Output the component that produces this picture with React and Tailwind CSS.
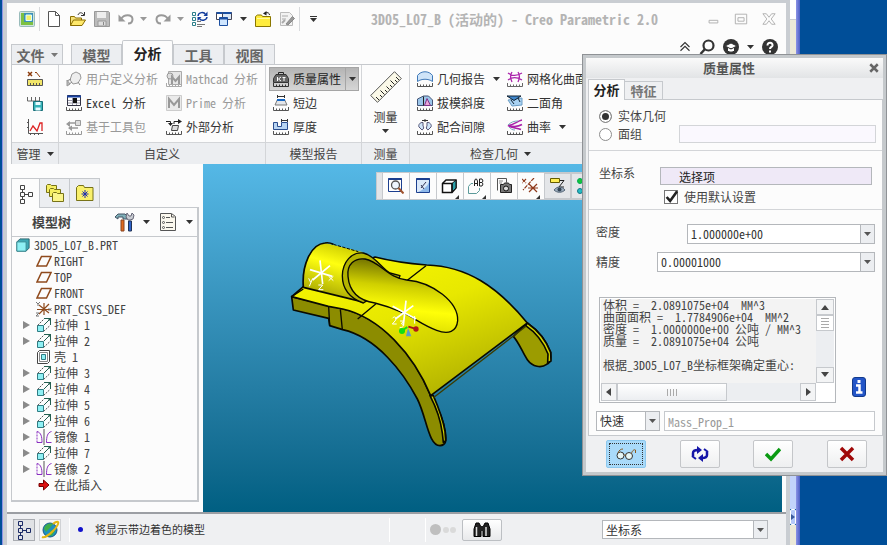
import { useState } from 'react'
import clsx from 'clsx'

/* ---------- icons ---------- */

function Icon({ children, className = 'size-4', box = '0 0 16 16' }) {
  return (
    <svg viewBox={box} className={clsx('shrink-0', className)} fill="none" stroke="currentColor" aria-hidden="true">
      {children}
    </svg>
  )
}

const Caret = ({ className = 'text-[#333]' }) => (
  <Icon box="0 0 7 4" className={clsx('h-1 w-[7px]', className)}>
    <path d="M0 0h7L3.500 4z" fill="currentColor" stroke="none" />
  </Icon>
)

// small ruler drawn under most of the analysis icons
const Ruler = ({ color = '#555' }) => <path d="M.5 12v3.500h15V12M3.500 13.500v2M6.500 13.500v2M9.500 13.500v2M12.500 13.500v2" stroke={color} />

const AppIcon = () => (
  <Icon>
    <rect x=".5" y=".5" width="15" height="15" rx="1" fill="#cfe3dc" stroke="#9bb" />
    <path d="M2 2h4v8h8v4H2z" fill="#7cc142" stroke="none" />
    <path d="M5 2h9v9H5z" fill="#3c8fb8" stroke="none" />
    <path d="M7 4h5.500v5.500H7z" fill="#f4f06a" stroke="#dff" />
  </Icon>
)
const NewIcon = () => (
  <Icon>
    <path d="M2.500.5h7l4 4v11h-11z" fill="#fff" stroke="#555" />
    <path d="M9.500.5v4h4" stroke="#555" />
  </Icon>
)
const OpenIcon = () => (
  <Icon>
    <path d="M.5 14.500v-9h4l1 1.500h6v2" fill="#f6e27a" stroke="#8a6d00" />
    <path d="M.5 14.500l3-5.500h12l-3.500 5.500z" fill="#ffe96b" stroke="#8a6d00" />
    <path d="M8 4c1-3 4-3 6 0M14.500 1v3.500H11" stroke="#333" />
  </Icon>
)
const SaveIcon = () => (
  <Icon>
    <path d="M.5.500h14l1 1v14H.5z" fill="#bbb" stroke="#999" />
    <path d="M3 1h9v6H3z" fill="#eee" stroke="none" />
    <path d="M4 10h8v5H4z" fill="#ddd" stroke="#999" />
    <path d="M9.500 11v3" stroke="#888" />
  </Icon>
)
const UndoIcon = () => (
  <Icon>
    <path d="M3 8c3-5 11-5 11.500 0 0 3-2 4.500-4.500 4.500" stroke="#999" strokeWidth="2" />
    <path d="M.5 3.500v7h7z" fill="#999" stroke="none" />
  </Icon>
)
const RedoIcon = () => (
  <Icon>
    <path d="M13 8C10 3 2 3 1.500 8c0 3 2 4.500 4.500 4.500" stroke="#999" strokeWidth="2" />
    <path d="M15.500 3.500v7h-7z" fill="#999" stroke="none" />
  </Icon>
)
const RegenIcon = () => (
  <Icon>
    <path d="M.5 1.500h3v3h-3zM.5 6.500h3v3h-3zM.5 11.500h3v3h-3z" stroke="#2a7f8a" />
    <path d="M5 10.500h4M5 13.500h8M5 15.500h5" stroke="#777" />
    <path d="M6 5c.5-4 6-4.500 7.500-1.500M15 6c-.5 3.500-6 4.500-7.500 1.500" stroke="#123c9c" strokeWidth="1.500" />
    <path d="M15.500.500v4.500h-4zM5.500 10V6h4z" fill="#123c9c" stroke="none" />
  </Icon>
)
const WindowsIcon = () => (
  <Icon>
    <path d="M.5 1.500h9v7h-9z" fill="#fff" stroke="#445" />
    <path d="M.5 2h9" stroke="#1c4fa0" strokeWidth="2" />
    <path d="M6.500 1.500h9v7h-9z" fill="#dce9f7" stroke="#445" />
    <path d="M6.500 2h9" stroke="#1c4fa0" strokeWidth="2" />
    <path d="M3.500 6.500h8v8h-8z" fill="#cfe6ff" stroke="#1c4fa0" />
    <path d="M3.500 7.500h8" stroke="#1c4fa0" strokeWidth="2" />
  </Icon>
)
const CloseFolderIcon = () => (
  <Icon>
    <path d="M.5 15.500v-10l2-1.500h4l1 1.500h8v10z" fill="#ffec3d" stroke="#8a7600" />
    <path d="M2 7.500h13" stroke="#fff9a8" />
    <path d="M14.500 4c0-2-2-3-4-2" stroke="#222" />
    <path d="M8 2.500L11.500 0v4.500z" fill="#222" stroke="none" />
  </Icon>
)
const EditSheetIcon = () => (
  <Icon>
    <path d="M1.500 1.500h9l3 3v10h-12z" fill="#f2f2f2" stroke="#bbb" />
    <path d="M3 5h6M3 8h4" stroke="#aaa" />
    <path d="M7 13l6.500-7.500 2 2L9 14z" fill="#999" stroke="#888" />
    <path d="M3 12l3-3" stroke="#aaa" strokeWidth="2" />
  </Icon>
)

const CalcIcon = () => (
  <Icon>
    <path d="M1 1l4 4M5 1L1 5" stroke="#8b3a0a" strokeWidth="1.500" />
    <path d="M9 1l4 5M8 1.500h1" stroke="#8b3a0a" />
    <path d="M.5 8.500h15v6H.5z" fill="#f2e66a" stroke="#555" />
    <path d="M3.500 12v2M6.500 12v2M9.500 12v2M12.500 12v2" stroke="#555" />
  </Icon>
)
const SaveAnalysisIcon = () => (
  <Icon>
    <path d="M.5 2v4h12M4.500 2v4M8.500 2v4M12.500 2v4" stroke="#666" />
    <path d="M6.500 6.500h9v9h-9z" fill="#37b3b8" stroke="#176f78" />
    <path d="M8.500 7h5v3h-5zM8.500 12.500h5v3h-5z" fill="#e9fbff" stroke="none" />
  </Icon>
)
const GraphIcon = () => (
  <Icon>
    <path d="M1.500 0v14.500H16M3.500 14.500V16M7.500 14.500V16M11.500 14.500V16M0 3.500h1.500M0 8.500h1.500" stroke="#555" />
    <path d="M3 12l3-5 4 5 3-8h2v8" stroke="#d22" strokeWidth="1.300" />
  </Icon>
)
const UdaIcon = () => (
  <Icon>
    <path d="M6 3l4-2 4 2 1 4-3 5-5 1-3-4z" fill="#eee" stroke="#999" />
    <path d="M1 10l4-2M2 14l4-3M12 11l2 3" stroke="#888" />
    <path d="M1 9l3 4-3 2z" fill="#bbb" stroke="#999" />
  </Icon>
)
const ExcelIcon = () => (
  <Icon>
    <path d="M1.500.500h13v10h-13z" fill="#fff" stroke="#334" />
    <path d="M1 1.500h14" stroke="#1740a0" strokeWidth="2" />
    <path d="M6.500 3v7M2 5.500h12M2 8h12M10.500 3v7" stroke="#99a" />
    <path d="M7 3h4v5H7z" fill="#111" stroke="none" />
    <Ruler />
  </Icon>
)
const ToolkitIcon = () => (
  <Icon>
    <path d="M9.500 1.500h5v5h-5z" fill="#ddd" stroke="#999" />
    <path d="M9 4H3v3M3 9h9" stroke="#999" strokeWidth="1.500" />
    <path d="M0 5l4-3v6zM6 6.500L2 9l4 3z" fill="#999" stroke="none" />
    <Ruler color="#999" />
  </Icon>
)
const MathcadIcon = () => (
  <Icon>
    <path d="M2.500.500h13v13h-13z" fill="#e6e6e6" stroke="#aaa" />
    <circle cx="4" cy="5" r="3" fill="#ddd" stroke="#999" />
    <path d="M6 13V6l3.500 4L13 6v7" stroke="#999" strokeWidth="2" />
    <Ruler color="#aaa" />
  </Icon>
)
const PrimeIcon = () => (
  <Icon>
    <path d="M.5.500h15v15H.5z" fill="#eaeaea" stroke="#ccc" />
    <path d="M3 13V4l5 6 5-6v9" stroke="#999" strokeWidth="2" />
  </Icon>
)
const ExternalIcon = () => (
  <Icon>
    <path d="M6.500 6.500h6l-1 5h-6z" fill="#ddd" stroke="#444" />
    <path d="M0 2.500h4.500v3M8 5V2.500h5" stroke="#222" />
    <path d="M2 4h5L4.500 7zM12 0l4 2.500L12 5z" fill="#222" stroke="none" />
    <Ruler />
  </Icon>
)
const MassIcon = () => (
  <Icon>
    <path d="M5.500 4V1.500h5V4" stroke="#222" />
    <path d="M3 3.500h10l2.500 4v4H.5v-4z" fill="#666" stroke="#333" />
    <path d="M4.500 6v4M8 6L5.500 8 8 10M9.500 6.500h3M11 6v4" stroke="#fff" />
    <Ruler color="#333" />
  </Icon>
)
const ShortEdgeIcon = () => (
  <Icon>
    <path d="M4.500 0v3M11.500 0v3M4.500 1.500h7" stroke="#333" />
    <path d="M4.500 4.500h7L14 10H2z" fill="#e3e6ea" stroke="#777" />
    <path d="M4 5h8" stroke="#1667c4" strokeWidth="2" />
    <Ruler />
  </Icon>
)
const ThicknessIcon = () => (
  <Icon>
    <path d="M.5 3.500h4v4h4v-4h6v7H.5z" fill="#b8d4f2" stroke="#2a4d8f" />
    <path d="M8.500 0v3M14.500 0v3M8.500 1.500h6" stroke="#333" />
    <Ruler />
  </Icon>
)
const MeasureIcon = () => (
  <Icon box="0 0 32 32" className="size-8">
    <path d="M.7 24.500L24.500.700l6.800 6.800L7.500 31.300z" fill="#fbf9e8" stroke="#555" />
    <path d="M9 29l-3-3M12 26l-2-2M14.500 23.500l-4-4M17 21l-2-2M19.500 18.500l-3-3M22 16l-2-2M24.500 13.500l-4-4M27 11l-2-2M29 9l-3-3" stroke="#222" />
  </Icon>
)
const GeomReportIcon = () => (
  <Icon>
    <path d="M.5 10.500v-6C4-.5 12-.5 15.500 4.500v6c-4-3-11-3-15 0z" fill="#cfe4f8" stroke="#3f78b8" />
    <Ruler />
  </Icon>
)
const DraftIcon = () => (
  <Icon>
    <path d="M.5 4l6-3h5l4 4v5.500H.5z" fill="#9cc6ea" stroke="#457" />
    <path d="M7.500 10.500L10 3.500l3.500 7z" fill="#eaa8d8" stroke="#82338a" />
    <path d="M6.500 1.500v9" stroke="#222" />
    <Ruler />
  </Icon>
)
const ClearanceIcon = () => (
  <Icon>
    <path d="M6 3.500C3 3 1 6 2 8l3 3c2-1 2-3 1-4zM10 3.500c3-.5 5 2.500 4 4.500l-3 3c-2-1-2-3-1-4z" fill="#cfe4f8" stroke="#557" />
    <path d="M5 1.500h6M8 0v3" stroke="#333" />
    <Ruler />
  </Icon>
)
const MeshIcon = () => (
  <Icon>
    <path d="M1 2c4 3 9 3 14 0M1 9c4-3 9-3 14 0M5 1c-2 3-2 6 0 10M11 1c2 3 2 6 0 10" stroke="#a2a" strokeWidth="1.300" />
    <Ruler color="#666" />
  </Icon>
)
const DihedralIcon = () => (
  <Icon>
    <path d="M1 5l14-2v7L5 11z" fill="#a9d2f2" stroke="#6a9cc4" />
    <path d="M0 1h14L7 5.500z" fill="#3f86cc" stroke="#123" />
    <path d="M4 5l3 4M11 3l2 4" stroke="#123" />
    <Ruler />
  </Icon>
)
const CurvatureIcon = () => (
  <Icon>
    <path d="M15 1C10 2 7 6 1 6.500c4 1 9 2 14-1M1 6.500c3 3 8 2 13 4" stroke="#a2a" strokeWidth="1.500" />
    <path d="M1 6c3-3 6-4 10-4M2 8c2 2 3 3 6 3" stroke="#7ab" />
    <Ruler />
  </Icon>
)

const TreeTabIcon = ({ color = '#444' }) => (
  <Icon box="0 0 14 20" className="h-5 w-3.5">
    <path d="M1.500 1.500h4v4h-4zM1.500 8.500h4v4h-4zM1.500 15.500h4v4h-4zM9.500 8.500h4v4h-4z" stroke={color} />
    <path d="M3.500 5.500v3M3.500 12.500v3M5.500 10.500h4" stroke={color} />
  </Icon>
)
const FoldersIcon = () => (
  <Icon box="0 0 20 20" className="size-5">
    <path d="M1.500 9.500v-7l1-1h3l1 1h5v7z" fill="#f6ef62" stroke="#777218" />
    <path d="M4.500 13.500v-7l1-1h3l1 1h6v7z" fill="#f6ef62" stroke="#777218" />
    <path d="M7.500 18.500v-8l1-1h3l1 1h6v8z" fill="#fbf58a" stroke="#777218" />
  </Icon>
)
const FavFolderIcon = () => (
  <Icon box="0 0 20 20" className="size-5">
    <path d="M1.500 17.500v-13l2-2h5l1 2h8.500v13z" fill="#f9f06c" stroke="#777218" />
    <path d="M10 7v8M6.500 11h7M7.500 8.500l5 5M12.500 8.500l-5 5" stroke="#1a2bb0" />
  </Icon>
)
const ToolsIcon = () => (
  <Icon box="0 0 20 20" className="size-5">
    <path d="M0 5l3-3h7l2 2v3H8V5H3v2z" fill="#7fb0b8" stroke="#456" />
    <path d="M6 8h3v11H6z" fill="#e26a1c" stroke="#842" />
    <path d="M12 1l2 3h2l1-3 2 2-1 4-3 1h-2l-2-3z" fill="#c8ccd2" stroke="#667" />
    <path d="M13.500 9h3v10h-3z" fill="#2f62c8" stroke="#235" />
  </Icon>
)
const ListIcon = () => (
  <Icon box="0 0 16 20" className="h-5 w-4">
    <path d="M.5 1.500h11l4 3v14H.5z" fill="#fbf8ee" stroke="#555" />
    <path d="M6 5.500h4M6 10.500h7M6 15.500h7M11.500 2v3h3" stroke="#555" />
    <circle cx="3.500" cy="5.500" r="1" stroke="#555" />
    <circle cx="3.500" cy="10.500" r="1" stroke="#555" />
    <circle cx="3.500" cy="15.500" r="1" stroke="#555" />
  </Icon>
)

const PartIcon = () => (
  <Icon className="size-3.5">
    <path d="M1 4.500L4.500 1H15v10.500L11.500 15H1z" fill="#3fa8b4" stroke="#245f68" />
    <path d="M1 4.500h10.500V15H1z" fill="#8ff0f4" stroke="#3a8a92" />
  </Icon>
)
const PlaneIcon = () => (
  <Icon>
    <path d="M5.500 3.500H15L10.500 13H1z" stroke="#8f4a1c" strokeWidth="1.500" />
  </Icon>
)
const CsysIcon = () => (
  <Icon>
    <path d="M8 2v12M3 4l10 8M13 3L3 13M1 8.500h14" stroke="#8f4a1c" strokeWidth="1.200" />
    <path d="M0 1l2 2 2-2M2 3v2M12.500 7l3 3M15.500 7l-3 3M0 12h3l-3 3h3" stroke="#777" />
  </Icon>
)
const ExtrudeIcon = () => (
  <Icon>
    <path d="M1.500 8.500h6v6h-6z" fill="#8ff0f4" stroke="#2f7d84" />
    <path d="M1.500 8.500L8 2M7.500 14.500l6.500-6" stroke="#555" strokeDasharray="2 1" />
    <path d="M8 1.500h6.500V8M14.500 1.500L8 8" stroke="#245f50" />
    <path d="M11 1h4v4z" fill="#245f50" stroke="none" />
  </Icon>
)
const ShellIcon = () => (
  <Icon>
    <path d="M1.500 3.500l2-2h10v11l-2 2h-10z" fill="#fff" stroke="#444" />
    <path d="M3.500 3.500h8v9h-8z" stroke="#888" />
    <path d="M5.500 5.500h4v5h-4z" fill="#8ff0f4" stroke="#2f7d84" />
  </Icon>
)
const MirrorIcon = () => (
  <Icon>
    <path d="M8 0v16" stroke="#555" />
    <path d="M1 2.500c4 1 5 5 5 11H1M15.500 2.500c-4 1-5 5-5 11h5" stroke="#8a2fc0" />
    <path d="M1 2.500v11" stroke="#8a2fc0" strokeDasharray="2 1" />
  </Icon>
)
const InsertIcon = () => (
  <Icon>
    <path d="M3 6.500h4.500V3l5.500 5-5.500 5V9.500H3z" fill="#d11" stroke="#700" />
  </Icon>
)

const ZoomFitIcon = () => (
  <Icon>
    <path d="M.5.500h13v13H.5z" fill="#fff" stroke="#1c3f8f" />
    <path d="M.5 1h13" stroke="#1c3f8f" strokeWidth="2" />
    <circle cx="7.500" cy="7" r="4" fill="#eef6ff" stroke="#555" strokeWidth="1.300" />
    <path d="M10.500 10l5 5.500" stroke="#a0522d" strokeWidth="2" />
  </Icon>
)
const RepaintIcon = () => (
  <Icon>
    <path d="M1.500.500h13v14h-13z" fill="#dbe9fa" stroke="#1c3f8f" />
    <path d="M1.500 1h13" stroke="#1c3f8f" strokeWidth="2" />
    <path d="M3 14C8 12 12 9 14 4v10z" fill="#8db8ea" stroke="none" />
    <path d="M11 4l-5 6M6 7l3 4" stroke="#335" />
  </Icon>
)
const CubeIcon = () => (
  <Icon>
    <path d="M1.500 5.500L5 2h10v8l-4 4.500H1.500z" fill="#fff" stroke="#111" strokeWidth="1.500" />
    <path d="M11 5.500L15 2v8l-4 4z" fill="#2c9fa8" stroke="#111" />
    <path d="M1.500 5.500H11v9" stroke="#111" strokeWidth="1.500" />
  </Icon>
)
const ViewsIcon = () => (
  <Icon>
    <path d="M5 5.500H3l-2.500 3v7h8l3-3V10" stroke="#5b9a9a" />
    <path d="M6.500 8V3l1-2h1l1 2v5M6.500 5.500h3M11.500 1v7H14l1-2-1-1.500 1-1.500-1-2zM11.500 4.500H14" stroke="#222" />
  </Icon>
)
const CameraIcon = () => (
  <Icon>
    <path d="M1.500 12.500v-12h9v4" stroke="#555" />
    <path d="M3 3h4M3 5h3" stroke="#888" />
    <path d="M4.500 6.500h3l1-1.500h4l1 1.500h2v8h-11z" fill="#777" stroke="#222" />
    <circle cx="10" cy="10.500" r="2.500" fill="#ddd" stroke="#111" />
  </Icon>
)
const DatumIcon = () => (
  <Icon>
    <path d="M0 1l4 4M4 1L0 5M12 0L1 12" stroke="#8f3a1c" strokeWidth="1.200" strokeDasharray="4 1" />
    <path d="M7 6l8 8M15 6l-8 8M6 10h10" stroke="#8f3a1c" strokeWidth="1.200" />
  </Icon>
)
const AnnotIcon = () => (
  <Icon>
    <path d="M.5.500h9v4h-9z" fill="#ffee55" stroke="#665c00" />
    <path d="M10 2.500h4L9 9h5" stroke="#222" />
    <path d="M4 12c3-4 8-4 11 0-3 3-8 3-11 0z" fill="#9ab" stroke="#567" />
    <circle cx="9.500" cy="11.500" r="2" fill="#345" stroke="none" />
  </Icon>
)
const SpinIcon = () => (
  <Icon>
    <circle cx="3" cy="3" r="2.500" fill="#15c43a" stroke="#0a5" />
    <circle cx="3" cy="13" r="2.500" fill="#25bcc4" stroke="#178" />
    <path d="M6 3h8M6 13h8" stroke="#222" />
  </Icon>
)

const PlanetIcon = () => (
  <Icon box="0 0 20 20" className="size-5">
    <circle cx="10" cy="10" r="7" fill="#1d8fc0" stroke="#1a5c86" />
    <path d="M5 6c3-3 6-3 8-2l-3 4-4 4-2-3zM11 10l4 1-3 5-3-1z" fill="#3fae49" stroke="none" />
    <path d="M2 17C4 18 9 15 13 11S19 3 18 2s-4 1-5 2" stroke="#e2b714" strokeWidth="2" />
  </Icon>
)
const BinocularsIcon = () => (
  <Icon box="0 0 18 16" className="h-4 w-[18px]">
    <path d="M3 1h3l2 4v9.500H1V7zM15 1h-3l-2 4v9.500h7V7z" fill="#222" stroke="#000" />
    <path d="M7 4h4v5H7z" fill="#222" stroke="none" />
    <path d="M3.500 5v9M13 5v9" stroke="#ddd" strokeWidth="1.500" />
  </Icon>
)

/* ---------- window chrome ---------- */

const fileTools = [
  { label: '新建', icon: NewIcon },
  { label: '打开', icon: OpenIcon },
  { label: '保存', icon: SaveIcon },
]

function QuickBar() {
  return (
    <header className="flex h-8 items-center pl-3">
      <AppIcon />
      <span className="mr-1.5 ml-1 h-6 w-px bg-[#d8dadd]" />
      <div className="flex items-center gap-2">
        {fileTools.map(({ label, icon: Glyph }) => (
          <button key={label} title={label}><Glyph /></button>
        ))}
        <button title="撤消" className="flex items-center gap-1.5"><UndoIcon /><Caret className="text-[#999]" /></button>
        <button title="重做" className="flex items-center gap-1.5"><RedoIcon /><Caret className="text-[#999]" /></button>
        <button title="重新生成"><RegenIcon /></button>
        <button title="窗口" className="flex items-center gap-2"><WindowsIcon /><Caret /></button>
        <button title="关闭"><CloseFolderIcon /></button>
        <button title="编辑"><EditSheetIcon /></button>
      </div>
      <span className="mr-2.5 ml-1 h-6 w-px bg-[#d8dadd]" />
      <button title="自定义快速访问工具栏" className="flex flex-col items-center gap-px">
        <span className="h-px w-[7px] bg-[#333]" />
        <Caret />
      </button>
      <h1 className="flex-1 truncate pl-[54px] text-sm leading-5 font-bold text-[#b4b4b4]">
        3D05_L07_B (活动的) - Creo Parametric 2.0
      </h1>
      <div className="flex items-center gap-3.5 pr-2.5 text-[#aaa]">
        <button title="最小化">
          <Icon className="size-3.5"><path d="M3.500 9.500h10v3h-10z" /></Icon>
        </button>
        <button title="最大化">
          <Icon className="size-3.5"><path d="M1.500 2.500h13v11h-13zM4.500 6.500h7v4h-7z" /></Icon>
        </button>
        <button title="关闭窗口">
          <Icon className="size-3.5"><path d="M1 2h4l3 4 3-4h4l-4.500 6 4.500 6h-4L8 10l-3 4H1l4.500-6z" /></Icon>
        </button>
      </div>
    </header>
  )
}

const ribbonTabs = ['模型', '分析', '工具', '视图']

function RibbonTabs({ active, onSelect }) {
  return (
    <div className="flex h-[29px] items-end pl-1">
      <button className="flex h-5 w-[52px] items-center justify-center gap-1.5 border border-b-0 border-[#c6c9cd] bg-[#eceef1] text-sm leading-5 font-bold text-[#666]">
        文件 <Caret className="text-[#777]" />
      </button>
      <div className="ml-2 flex items-end" role="tablist">
        {ribbonTabs.map((tab) => (
          <button
            key={tab}
            role="tab"
            aria-selected={tab === active}
            onClick={() => onSelect(tab)}
            className={clsx(
              'w-[51px] border border-b-0 border-[#c6c9cd] text-sm font-bold',
              tab === active ? 'z-10 -mb-px h-[25px] rounded-t-xs bg-[#fcfcfc] text-[#222]' : 'h-5 bg-[#eceef1] leading-5 text-[#666]'
            )}
          >
            {tab}
          </button>
        ))}
      </div>
      <div className="ml-auto flex h-6 items-center gap-2 self-start pr-2 text-[#333]">
        <button title="最小化功能区">
          <Icon className="size-3"><path d="M2 8l6-6 6 6M2 13l6-6 6 6" strokeWidth="1.500" /></Icon>
        </button>
        <button title="搜索">
          <Icon>
            <circle cx="9.500" cy="6.500" r="5" strokeWidth="2.200" />
            <path d="M6 10l-4.500 5" strokeWidth="2.500" />
          </Icon>
        </button>
        <button title="学习连接器" className="flex items-center gap-2">
          <Icon>
            <circle cx="8" cy="8" r="8" fill="#333" stroke="none" />
            <path d="M2 7l6-3 6 3-6 3zM4.500 9v3c2 1.500 5 1.500 7 0V9" fill="#fff" stroke="#333" />
          </Icon>
          <Caret />
        </button>
        <button title="帮助">
          <Icon>
            <circle cx="8" cy="8" r="8" fill="#333" stroke="none" />
            <path d="M5.500 6.500c0-4 5.500-3.500 5 0-.3 1.500-2.500 1.500-2.500 3.500M8 11.500v2" stroke="#fff" strokeWidth="2" />
          </Icon>
        </button>
      </div>
    </div>
  )
}

/* ---------- ribbon ---------- */

function Command({ icon: Glyph, label, disabled, menu }) {
  return (
    <button disabled={disabled} className={clsx('flex h-6 items-center gap-1 whitespace-pre', disabled ? 'text-[#999]' : 'text-[#333]')}>
      <Glyph />
      {label}
      {menu && <Caret className="ml-1 text-[#333]" />}
    </button>
  )
}

function Group({ title, menu, className, children }) {
  return (
    <section className={clsx('flex flex-col border-r border-[#d3d5d8]', className)}>
      <div className="flex h-[77px] pt-0.5">{children}</div>
      <h2 className="flex h-[22px] items-center justify-center gap-1.5 border-t border-[#d3d5d8] bg-[#eceef1] text-[#444]">
        {title}
        {menu && <Caret />}
      </h2>
    </section>
  )
}

function Ribbon() {
  return (
    <div className="flex border-t border-l border-[#c6c9cd] bg-[#fcfcfc]">
      <Group title="管理" menu className="w-[47px] shrink-0">
        <div className="flex w-full flex-col items-center">
          {[CalcIcon, SaveAnalysisIcon, GraphIcon].map((Glyph, i) => (
            <button key={i} className="flex h-6 items-center"><Glyph /></button>
          ))}
        </div>
      </Group>
      <Group title="自定义" className="w-[207px] shrink-0">
        <div className="w-[107px] pl-[7px]">
          <Command icon={UdaIcon} label="用户定义分析" disabled />
          <Command icon={ExcelIcon} label="Excel 分析" />
          <Command icon={ToolkitIcon} label="基于工具包" disabled />
        </div>
        <div>
          <Command icon={MathcadIcon} label="Mathcad 分析" disabled />
          <Command icon={PrimeIcon} label="Prime 分析" disabled />
          <Command icon={ExternalIcon} label="外部分析" />
        </div>
      </Group>
      <Group title="模型报告" className="w-24 shrink-0">
        <div className="pl-[3px]">
          <div className="flex border border-[#a5a5a5] bg-linear-to-b from-[#b4b4b4] to-[#d6d6d6]">
            <button className="flex h-[22px] items-center gap-1 pr-1 pl-[3px] text-[#222]"><MassIcon />质量属性</button>
            <button title="质量属性选项" className="flex w-[13px] items-center justify-center border-l border-[#a5a5a5]"><Caret /></button>
          </div>
          <div className="pl-1">
            <Command icon={ShortEdgeIcon} label="短边" />
            <Command icon={ThicknessIcon} label="厚度" />
          </div>
        </div>
      </Group>
      <Group title="测量" className="w-12 shrink-0">
        <button className="flex w-full flex-col items-center gap-1 pt-1 text-[#333]">
          <MeasureIcon />
          <span className="pt-0.5 leading-4">测量</span>
          <Caret />
        </button>
      </Group>
      <Group title="检查几何" menu className="w-[182px] shrink-0">
        <div className="w-[97px] pl-[7px]">
          <Command icon={GeomReportIcon} label="几何报告" menu />
          <Command icon={DraftIcon} label="拔模斜度" />
          <Command icon={ClearanceIcon} label="配合间隙" />
        </div>
        <div>
          <Command icon={MeshIcon} label="网格化曲面" />
          <Command icon={DihedralIcon} label="二面角" />
          <Command icon={CurvatureIcon} label="曲率" menu />
        </div>
      </Group>
      <div className="flex flex-1 flex-col">
        <div className="h-[77px]" />
        <div className="h-[22px] border-t border-[#d3d5d8] bg-[#eceef1]" />
      </div>
    </div>
  )
}

/* ---------- model tree ---------- */

const treeItems = [
  { label: 'RIGHT', icon: PlaneIcon },
  { label: 'TOP', icon: PlaneIcon },
  { label: 'FRONT', icon: PlaneIcon },
  { label: 'PRT_CSYS_DEF', icon: CsysIcon },
  { label: '拉伸 1', icon: ExtrudeIcon, open: true },
  { label: '拉伸 2', icon: ExtrudeIcon, open: true },
  { label: '壳 1', icon: ShellIcon },
  { label: '拉伸 3', icon: ExtrudeIcon, open: true },
  { label: '拉伸 4', icon: ExtrudeIcon, open: true },
  { label: '拉伸 5', icon: ExtrudeIcon, open: true },
  { label: '拉伸 6', icon: ExtrudeIcon, open: true },
  { label: '镜像 1', icon: MirrorIcon, open: true },
  { label: '拉伸 7', icon: ExtrudeIcon, open: true },
  { label: '镜像 2', icon: MirrorIcon, open: true },
  { label: '在此插入', icon: InsertIcon },
]

function ModelTree() {
  return (
    <aside className="flex w-[196px] shrink-0 flex-col pt-3.5 pr-1 pb-2.5 pl-1">
      <div className="flex">
        <button title="模型树" className="z-10 -mb-px flex h-[30px] w-[29px] items-center justify-center border border-b-0 border-[#c6c9cd] bg-[#fcfcfc]"><TreeTabIcon /></button>
        <button title="文件夹浏览器" className="flex h-[29px] w-[30px] items-center justify-center border-t border-r border-[#c6c9cd] bg-[#eceef1]"><FoldersIcon /></button>
        <button title="收藏夹" className="flex h-[29px] w-[30px] items-center justify-center border-t border-r border-[#c6c9cd] bg-[#eceef1]"><FavFolderIcon /></button>
      </div>
      <div className="flex-1 border border-r-2 border-b-2 border-[#c6c9cd]">
        <div className="flex h-[29px] items-center border-b border-[#c6c9cd] pr-1 pl-5">
          <h2 className="flex-1 text-[13px] font-bold text-[#444]">模型树</h2>
          <button title="设置" className="mr-2.5 flex items-center gap-2"><ToolsIcon /><Caret /></button>
          <button title="显示" className="flex items-center gap-2.5"><ListIcon /><Caret /></button>
        </div>
        <div className="flex h-4 items-center gap-1 pl-1 text-[#444]"><PartIcon />3D05_L07_B.PRT</div>
        <ul>
          {treeItems.map(({ label, icon: Glyph, open }) => (
            <li key={label} className="flex h-4 items-center text-[#444]">
              <span className="flex w-6 justify-center pl-1">
                {open && <Icon box="0 0 8 8" className="size-2"><path d="M1 0l7 4-7 4z" fill="#8a8a8a" stroke="none" /></Icon>}
              </span>
              <Glyph />
              <span className="pl-0.5">{label}</span>
            </li>
          ))}
        </ul>
      </div>
    </aside>
  )
}

/* ---------- graphics area ---------- */

const viewTools = [
  { label: '重新调整', icon: ZoomFitIcon },
  { label: '重画', icon: RepaintIcon },
  { label: '显示样式', icon: CubeIcon, menu: true },
  { label: '已保存方向', icon: ViewsIcon, menu: true },
  { label: '视图管理器', icon: CameraIcon },
  { label: '基准显示', icon: DatumIcon, menu: true },
  { label: '注释显示', icon: AnnotIcon, pressed: true },
  { label: '旋转中心', icon: SpinIcon, pressed: true },
]

function PartModel() {
  return (
    <svg viewBox="0 0 870 675" className="absolute top-[65px] left-[77px] w-[290px]" stroke="#0a0a00" strokeWidth="5" strokeLinejoin="round" fill="none">
      <defs>
        <linearGradient id="plate" x1="0" y1="0" x2="0.600" y2="1">
          <stop offset="0" stopColor="#fafa00" />
          <stop offset="0.500" stopColor="#e8e800" />
          <stop offset="1" stopColor="#b4b400" />
        </linearGradient>
        <linearGradient id="tube" x1="0.600" y1="0" x2="0.300" y2="1">
          <stop offset="0" stopColor="#c8c800" />
          <stop offset="0.350" stopColor="#ffff10" />
          <stop offset="1" stopColor="#9a9a00" />
        </linearGradient>
        <linearGradient id="slot" x1="0.350" y1="0" x2="0.200" y2="1">
          <stop offset="0" stopColor="#6c6c00" />
          <stop offset="0.350" stopColor="#d0d000" />
          <stop offset="0.650" stopColor="#ffff08" />
          <stop offset="1" stopColor="#d8d800" />
        </linearGradient>
      </defs>
      {/* far leg */}
      <path d="M700 322C718 342 728 372 742 392C758 414 784 418 800 406C814 400 813 385 812 370C800 338 775 305 742 282Z" fill="#9c9c00" />
      <path d="M742 282C775 305 800 338 812 370L813 396L803 402L804 375C790 340 770 312 737 290Z" fill="#d6d600" />
      {/* side wall and near leg */}
      <path d="M35 203L40 243L146 268L149 290L188 302C290 325 370 430 412 510C440 565 445 650 480 650C498 648 500 635 496 610C492 570 470 530 452 500C400 370 300 265 190 240Z" fill="#8c8c00" />
      <path d="M450 500C470 538 482 575 487 612L490 640L497 635L495 607C488 565 474 532 460 500Z" fill="#d0d000" />
      {/* top plate */}
      <path d="M35 203L70 173L285 84C340 98 390 104 440 108C560 112 650 170 742 282L452 500C400 375 300 265 188 240L145 232Z" fill="url(#plate)" />
      <path d="M460 506L738 292" strokeWidth="4" stroke="#3c3c00" />
      <path d="M146 233L149 290M181 241L187 302M35 203L70 180M233 270L288 224M382 154L438 110" strokeWidth="4" />
      {/* tube */}
      <path d="M70 175C65 110 92 45 135 42L250 70L200 100L188 150L215 200L260 218Z" fill="url(#tube)" stroke="none" />
      <path d="M70 175C65 110 92 45 135 42C145 40 152 42 160 46M70 175L245 218" />
      <path d="M160 46L235 68" strokeWidth="3" strokeDasharray="10 4" />
      <path d="M262 214L250 222C212 208 187 180 187 140C188 98 215 68 250 72C285 80 305 118 330 132L360 140L356 150L330 160L250 200Z" fill="#b4b400" strokeWidth="4" />
      {/* slot */}
      <path d="M204 142C200 105 225 86 255 90C300 98 325 148 380 153C460 160 535 220 533 275C530 308 505 318 470 304C430 290 400 265 370 252C340 238 310 228 285 222C240 215 208 190 204 142Z" fill="url(#slot)" strokeWidth="4" />
      {/* coordinate systems */}
      <g stroke="#fff" strokeWidth="5">
        <path d="M120 94L128 165M90 122L157 142M98 153L150 110" />
        <path d="M378 215L370 290M338 232L408 270M346 270L400 230" />
      </g>
      <g stroke="#fff" strokeWidth="3">
        <path d="M86 148L92 160M98 148L88 172M146 142L160 155M160 142L146 155M115 168H128L116 182H130" />
        <path d="M337 268C345 258 352 268 345 276L337 285H350M398 268L404 262V284M360 276H371L364 284C375 286 370 298 359 295" />
      </g>
      <path d="M385 293L405 299" stroke="#a01818" strokeWidth="6" />
      <circle cx="408" cy="300" r="8" fill="#b01818" stroke="none" />
      <path d="M382 294L366 305" stroke="#12e012" strokeWidth="6" />
      <circle cx="366" cy="306" r="9" fill="#12e012" stroke="none" />
      <path d="M384 296L378 322H394Z" fill="#5c9cc8" stroke="none" />
    </svg>
  )
}

function Graphics() {
  return (
    <main className="relative min-w-0 flex-1 overflow-hidden bg-linear-to-b from-[#55b8e6] to-[#005f82]">
      <div className="ml-[173px] flex pt-2">
        <div className="flex border border-[#c6c9cd] bg-[#fcfcfc]">
          <span className="w-[5px] bg-[#e2e4e7]" />
          {viewTools.map(({ label, icon: Glyph, menu, pressed }) => (
            <button
              key={label}
              title={label}
              className={clsx('flex h-[26px] w-[27px] items-center justify-center border-l border-[#c6c9cd]', pressed && 'border bg-[#e4e6e9]')}
            >
              <Glyph />
              {menu && <Icon box="0 0 4 4" className="-ml-0.5 size-1 self-end"><path d="M4 0v4H0z" fill="#333" stroke="none" /></Icon>}
            </button>
          ))}
        </div>
      </div>
      <PartModel />
    </main>
  )
}

/* ---------- shared form bits ---------- */

function Dropdown({ id, value, className, label }) {
  return (
    <div className={clsx('flex border border-[#b4b7bb] bg-white', className)}>
      <select id={id} aria-label={label} defaultValue={value} className="min-w-0 flex-1 appearance-none px-[3px] leading-4 text-[#333] outline-none">
        <option>{value}</option>
      </select>
      <span className="pointer-events-none flex w-3.5 items-center justify-center border-l border-[#b4b7bb] bg-[#eceef1]">
        <Caret className="text-[#555]" />
      </span>
    </div>
  )
}

function StatusBar() {
  return (
    <footer className="flex h-[33px] items-center border-t-2 border-[#9b9ea3] bg-[#eff0f2] pr-[18px] pl-1.5">
      <button title="显示导航器" className="flex h-[22px] w-[22px] items-center justify-center border border-[#a9acb1] bg-[#e0e2e5]"><TreeTabIcon color="#1b2a66" /></button>
      <button title="显示浏览器" className="ml-1 flex h-[22px] w-[22px] items-center justify-center border border-[#d0d2d5] bg-[#f6f6f6]"><PlanetIcon /></button>
      <span className="mr-2 ml-2 h-6 w-px bg-white" />
      <span className="mr-3 size-[5px] rounded-full bg-[#1111cc]" />
      <p className="flex-1 text-[11px] text-[#333]">将显示带边着色的模型</p>
      <span className="mr-[35px] h-6 w-px bg-white" />
      <span className="mr-1 h-6 w-px bg-white" />
      <span className="size-[11px] rounded-full bg-[#bfbfbf]" />
      <span className="ml-0.5 size-1.5 rounded-full bg-[#dadada]" />
      <span className="ml-px size-1.5 rounded-full bg-[#dadada]" />
      <button title="查找" className="ml-1.5 flex h-[22px] w-10 items-center justify-center rounded-xs border border-[#bcbfc3] bg-linear-to-b from-white to-[#e8e9eb]"><BinocularsIcon /></button>
      <Dropdown label="选择过滤器" value="坐标系" className="ml-[100px] h-[19px] w-[166px]" />
    </footer>
  )
}

/* ---------- mass properties dialog ---------- */

const report = `体积 =  2.0891075e+04  MM^3
曲面面积 =  1.7784906e+04  MM^2
密度 =  1.0000000e+00 公吨 / MM^3
质量 =  2.0891075e+04 公吨

根据_3D05_L07_B坐标框架确定重心:`

function ScrollButton({ title, d, className }) {
  return (
    <button title={title} className={clsx('flex items-center justify-center border border-[#c6c9cd] bg-[#f3f4f5]', className)}>
      <Icon box="0 0 8 8" className="size-2"><path d={d} fill="#444" stroke="none" /></Icon>
    </button>
  )
}

function Report() {
  return (
    <div className="grid h-[106px] w-[237px] grid-cols-[1fr_18px] grid-rows-[1fr_18px] border border-[#b4b7bb] bg-white p-px">
      <textarea
        readOnly
        aria-label="分析结果"
        value={report}
        wrap="off"
        className="resize-none overflow-hidden bg-[#f3f3f3] px-0.5 leading-3 whitespace-pre text-[#444] outline-none"
      />
      <div className="flex flex-col bg-[#eceef1]">
        <ScrollButton title="向上" d="M4 2l4 5H0z" className="h-4" />
        <div className="flex h-4 flex-col items-center justify-center gap-0.5 border border-[#c6c9cd] bg-white">
          <span className="h-px w-2 bg-[#aaa]" />
          <span className="h-px w-2 bg-[#aaa]" />
          <span className="h-px w-2 bg-[#aaa]" />
          <span className="h-px w-2 bg-[#aaa]" />
        </div>
        <ScrollButton title="向下" d="M0 1h8L4 6z" className="mt-auto h-4" />
      </div>
      <div className="flex bg-[#eceef1]">
        <ScrollButton title="向左" d="M6 0v8L1 4z" className="w-4" />
        <div className="flex w-[110px] items-center justify-center gap-0.5 border border-[#c6c9cd] bg-linear-to-b from-white to-[#eceef1]">
          <span className="h-[7px] w-px bg-[#aaa]" />
          <span className="h-[7px] w-px bg-[#aaa]" />
          <span className="h-[7px] w-px bg-[#aaa]" />
          <span className="h-[7px] w-px bg-[#aaa]" />
        </div>
        <ScrollButton title="向右" d="M2 0v8l5-4z" className="ml-auto w-4" />
      </div>
    </div>
  )
}

function DialogButton({ title, active, children }) {
  return (
    <button
      title={title}
      className={clsx(
        'flex h-7 w-10 items-center justify-center rounded-xs border p-0.5',
        active ? 'border-[#8cc8ee] bg-[#a9dafa]' : 'border-[#c4c6c9] bg-linear-to-b from-white to-[#eeeff0]'
      )}
    >
      <span className={clsx('flex size-full items-center justify-center', active && 'border border-dotted border-[#333]')}>{children}</span>
    </button>
  )
}

function MassDialog() {
  const [source, setSource] = useState('solid')
  const [useDefault, setUseDefault] = useState(true)
  const radio = 'size-[13px] appearance-none rounded-full border border-[#8d8d8d] bg-white checked:bg-[#333] checked:shadow-[inset_0_0_0_2px_#fff]'

  return (
    <div role="dialog" aria-label="质量属性" className="absolute top-[54px] right-0 w-[305px] border border-[#8f9296] bg-[#eff0f2] text-[#444]">
      <div className="border-3 border-[#c5c9cc]">
        <div className="flex h-5 items-center bg-linear-to-b from-[#fafafa] to-[#e2e4e6] pr-1 pl-[3px]">
          <h2 className="flex-1 text-center text-[13px] leading-5 font-bold text-[#555]">质量属性</h2>
          <button title="关闭"><Icon className="size-2.5 text-[#666]"><path d="M2 2l12 12M14 2L2 14" strokeWidth="4" /></Icon></button>
        </div>
        <div className="pt-px pl-0.5">
          <div className="flex items-end" role="tablist">
            <button role="tab" aria-selected="true" className="z-10 -mb-px h-[21px] w-[37px] border border-b-0 border-[#c6c9cd] bg-[#fcfcfc] text-[13px] leading-5 font-bold text-[#222]">分析</button>
            <button role="tab" aria-selected="false" className="h-[18px] w-[38px] border border-b-0 border-l-0 border-[#c6c9cd] text-[13px] leading-4 font-bold text-[#777]">特征</button>
          </div>
          <div className="border border-[#c6c9cd] bg-[#fcfcfc] pb-1">
            <div className="flex flex-col border-b border-[#d3d5d8] pt-2 pr-1.5 pb-1.5 pl-2.5">
              <label className="flex h-4 items-center gap-1.5">
                <input type="radio" name="source" checked={source === 'solid'} onChange={() => setSource('solid')} className={radio} />
                实体几何
              </label>
              <div className="flex h-5 items-center">
                <label className="flex w-20 items-center gap-1.5">
                  <input type="radio" name="source" checked={source === 'quilt'} onChange={() => setSource('quilt')} className={radio} />
                  面组
                </label>
                <input aria-label="面组收集器" className="h-[18px] min-w-0 flex-1 border border-[#d3d5d8] bg-[#faf8fe] px-1 outline-none" />
              </div>
            </div>
            <div className="border-b border-[#d3d5d8] px-2.5 pt-4 pb-1">
              <div className="flex items-start">
                <label htmlFor="csys" className="w-[61px] leading-3">坐标系</label>
                <input id="csys" defaultValue="选择项" className="h-[18px] min-w-0 flex-1 border border-[#b4b7bb] bg-[#efe9f7] px-[18px] leading-4 text-[#222] outline-none" />
              </div>
              <label className="mt-1 ml-[65px] flex h-4 items-center gap-1.5">
                <span className="grid size-3.5">
                  <input type="checkbox" checked={useDefault} onChange={(e) => setUseDefault(e.target.checked)} className="col-start-1 row-start-1 size-3.5 appearance-none border border-[#777] bg-white" />
                  {useDefault && (
                    <Icon className="pointer-events-none col-start-1 row-start-1 size-3.5"><path d="M3 8l4 4.500L15 1.500" stroke="#222" strokeWidth="3" /></Icon>
                  )}
                </span>
                使用默认设置
              </label>
            </div>
            <div className="flex flex-col gap-2 px-[7px] pt-3.5">
              <div className="flex items-start justify-between">
                <label htmlFor="density" className="leading-4">密度</label>
                <Dropdown id="density" value="1.000000e+00" className="h-5 w-[188px]" />
              </div>
              <div className="flex items-center justify-between">
                <label htmlFor="accuracy">精度</label>
                <Dropdown id="accuracy" value="0.00001000" className="h-5 w-[218px]" />
              </div>
            </div>
            <div className="mt-[25px] flex items-end gap-4 pl-2.5">
              <Report />
              <button title="信息" className="pb-1.5">
                <Icon box="0 0 14 20" className="h-5 w-3.5">
                  <rect x=".5" y=".5" width="13" height="19" rx="2.500" fill="#2456c8" stroke="#123a8c" />
                  <path d="M7 3v3" stroke="#fff" strokeWidth="3" />
                  <path d="M4 8.500h3.500V15M4 15.500h6.500" stroke="#fff" strokeWidth="2.500" />
                </Icon>
              </button>
            </div>
            <div className="mt-2 flex gap-1 px-[7px]">
              <Dropdown label="分析类型" value="快速" className="h-5 w-16" />
              <input aria-label="分析名称" defaultValue="Mass_Prop_1" className="h-5 min-w-0 flex-1 border border-[#c6c9cd] bg-white px-[3px] text-[#999] outline-none" />
            </div>
          </div>
        </div>
        <div className="flex justify-between pt-1 pr-4 pb-1 pl-5">
          <DialogButton title="预览" active>
            <Icon box="0 0 20 12" className="h-3 w-5">
              <circle cx="4.500" cy="7.500" r="3.500" fill="#e6f6f6" stroke="#333" />
              <circle cx="13" cy="8" r="3.500" fill="#e6f6f6" stroke="#333" />
              <path d="M8 7h2M2 5c1-3 3-4 5-4M15.500 5.500C16 3 18 1 19.500 2v3" stroke="#8a5a20" />
            </Icon>
          </DialogButton>
          <DialogButton title="重复">
            <Icon box="0 0 20 16" className="h-4 w-5">
              <path d="M3 10V7c0-2 2-3 5-3M17 6v3c0 2-2 3-5 3" stroke="#1515a8" strokeWidth="2.500" />
              <path d="M7 0l5 4-5 4zM13 8l-5 4 5 4z" fill="#1515a8" stroke="none" />
              <path d="M2 10l4 3M18 6l-4-3" stroke="#1515a8" strokeWidth="2" />
            </Icon>
          </DialogButton>
          <DialogButton title="确定">
            <Icon><path d="M1 8l5 5L15 3" stroke="#0a9a12" strokeWidth="3.500" /></Icon>
          </DialogButton>
          <DialogButton title="取消">
            <Icon><path d="M2 2l12 12M14 2L2 14" stroke="#a00808" strokeWidth="3.500" /></Icon>
          </DialogButton>
        </div>
      </div>
    </div>
  )
}

// sliver of the window that sits behind the main one
function BackWindow() {
  return (
    <div className="flex w-[97px]">
      <div className="flex w-1.5 flex-col">
        <div className="h-5 border-b border-[#c9cdd2] bg-white" />
        <div className="h-40 bg-[#ece9d8]" />
        <div className="flex-1 bg-[#c3d3fb]" />
        <div className="flex h-4 items-center justify-center rounded-xs border border-white bg-[#b4c8f8]">
          <Icon box="0 0 4 6" className="h-1.5 w-1"><path d="M0 0l4 3-4 3z" fill="#3a5a9c" stroke="none" /></Icon>
        </div>
        <div className="h-5 bg-[#ece9d8]" />
      </div>
      <div className="w-1 bg-linear-to-r from-[#8d93e6] to-[#4d5fc4]" />
    </div>
  )
}

export default function App() {
  const [tab, setTab] = useState('分析')

  return (
    <div className="relative flex min-h-screen overflow-hidden bg-[#004e98] font-['Noto_Sans_CJK_SC',monospace] text-xs [font-feature-settings:'hwid']">
      <div className="ml-0.5 w-px bg-[#8d93e6]" />
      <div className="flex min-w-0 flex-1 flex-col border-x-4 border-t-3 border-[#c9cdd2] bg-[#fcfcfc]">
        <QuickBar />
        <RibbonTabs active={tab} onSelect={setTab} />
        <div className="pl-1"><Ribbon /></div>
        <div className="flex flex-1 pr-1">
          <ModelTree />
          <Graphics />
        </div>
        <StatusBar />
      </div>
      <BackWindow />
      <MassDialog />
    </div>
  )
}
